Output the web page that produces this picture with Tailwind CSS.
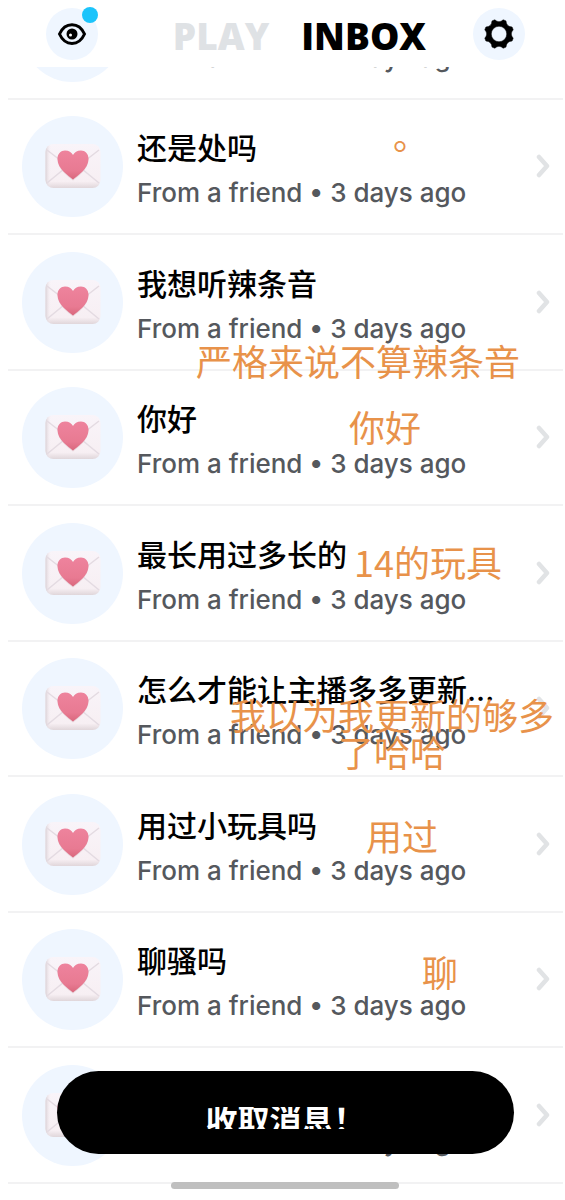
<!DOCTYPE html>
<html lang="zh-CN">
<head>
<meta charset="utf-8">
<meta name="viewport" content="width=device-width, initial-scale=1">
<title>INBOX</title>
<script src="https://cdn.jsdelivr.net/npm/@tailwindcss/browser@4"></script>
</head>
<body class="bg-white">
<svg class="absolute size-0" aria-hidden="true">
  <defs>
    <linearGradient id="paper" x1="0" y1="0" x2="0" y2="1"><stop offset="0" stop-color="#f9f4f9"/><stop offset="0.85" stop-color="#f7eff3"/><stop offset="1" stop-color="#e0d6da"/></linearGradient>
    <linearGradient id="heart" x1="0" y1="0" x2="0" y2="1"><stop offset="0" stop-color="#ee839d"/><stop offset="0.7" stop-color="#e87a92"/><stop offset="1" stop-color="#d9677c"/></linearGradient>
    <linearGradient id="edge" x1="0" y1="0" x2="1" y2="0"><stop offset="0" stop-color="#d9d0d5"/><stop offset="0.1" stop-color="#f7f0f5" stop-opacity="0"/></linearGradient>
  </defs>
  <symbol id="envelope" viewBox="0 0 56 46">
    <rect x="0.5" y="1" width="55" height="44" rx="8" fill="url(#paper)"/>
    <rect x="0.5" y="1" width="55" height="44" rx="8" fill="url(#edge)"/>
    <path d="M2 7 24 24q4 3 8 0L54 7M2 40l17-14M54 40 37 26" fill="none" stroke="#e4dbe2" stroke-width="1.5"/>
    <path d="M28 37.500C24 34 12.500 26.500 12.500 16.500 12.500 11 16 8 20 8c4 0 6.500 2 8 4.500C29.500 10 32 8 36 8c4 0 7.500 3 7.500 8.500C43.500 26.500 32 34 28 37.500Z" fill="#d9b9c4" opacity="0.5"/>
    <path d="M28 36.500C24 33 12.500 26 12.500 16 12.500 10.500 16 7.500 20 7.500c4 0 6.500 2 8 4.500C29.500 9.500 32 7.500 36 7.500c4 0 7.500 3 7.500 8.500C43.500 26 32 33 28 36.500Z" fill="url(#heart)"/>
  </symbol>
  <symbol id="chevron" viewBox="0 0 14 24">
    <path d="M3 3 11 12 3 21" fill="none" stroke="#e1e3e5" stroke-width="4.500" stroke-linecap="round" stroke-linejoin="round"/>
  </symbol>
</svg>

<div class="relative flex h-screen flex-col overflow-hidden font-['Inter','Noto_Sans_CJK_SC',sans-serif]">
  <header class="flex h-[67px] shrink-0 items-start justify-between pt-2 pr-10 pl-[46px]">
    <button type="button" aria-label="View" class="relative flex size-[52px] items-center justify-center rounded-full bg-[#eff6ff]">
      <svg class="h-6 w-[30px]" viewBox="0 0 30 24" aria-hidden="true">
        <path d="M2.500 12C8 -0.500 22 -0.500 27.500 12 22 24.500 8 24.500 2.500 12Z" fill="none" stroke="#000" stroke-width="3"/>
        <circle cx="15" cy="12" r="5.500"/><circle cx="13.500" cy="13" r="1.500" fill="#fff"/>
      </svg>
      <span class="absolute -top-px right-0 size-4 rounded-full bg-[#1cc4fb]"></span>
    </button>
    <nav class="flex gap-8 pt-[2px] pl-7 font-['Open_Sans',sans-serif] text-[37px] leading-[52px] font-extrabold">
      <a href="#play" class="text-[#dfe2e5]">PLAY</a>
      <a href="#inbox" class="text-black" aria-current="page">INBOX</a>
    </nav>
    <button type="button" aria-label="Settings" class="flex size-[52px] items-center justify-center rounded-full bg-[#eff6ff]">
      <svg class="size-[30px]" viewBox="0 0 30 30" aria-hidden="true">
        <path fill-rule="evenodd" stroke="#000" stroke-width="0.5" stroke-linejoin="round" d="M10.800 .8Q15 4.600 19.200 .8L22 1.900Q22.400 7.600 28.100 8L29.200 10.800Q25.400 15 29.200 19.200L28.100 22Q22.400 22.400 22 28.100L19.200 29.200Q15 25.400 10.800 29.200L8 28.100Q7.600 22.400 1.900 22L.8 19.200Q4.600 15 .8 10.800L1.900 8Q7.600 7.600 8 1.900ZM15 7.250a7.750 7.750 0 1 0 0 15.500 7.750 7.750 0 1 0 0-15.500Z"/>
      </svg>
    </button>
  </header>

  <main class="min-h-0 flex-1 overflow-hidden pr-[2px] pl-2">
    <ul id="list"></ul>
  </main>

  <button type="button" class="absolute right-[51px] bottom-[46px] left-[57px] flex h-[83px] items-center justify-center rounded-full bg-black pt-[11px] text-[32px] font-bold text-white">
    <span class="flex h-[22px] items-start overflow-hidden leading-[28px]">收取消息！</span>
  </button>
  <div class="absolute right-[166px] bottom-[11px] left-[171px] h-[7px] rounded-full bg-[#bfbfbf]"></div>
</div>

<script>
const rows = [
  { title: '你好' },
  { title: '还是处吗', note: '。', pos: 'left-[385px] top-[16px]' },
  { title: '我想听辣条音', note: '严格来说不算辣条音', pos: 'left-[188px] top-[107px]' },
  { title: '你好', note: '你好', pos: 'left-[341px] top-[37px]' },
  { title: '最长用过多长的', note: '14的玩具', pos: 'left-[346px] top-[37px]' },
  { title: '怎么才能让主播多多更新...', note: '我以为我更新的够多<br>了哈哈', pos: 'left-[222px] top-[54px]' },
  { title: '用过小玩具吗', note: '用过', pos: 'left-[358px] top-[40px]' },
  { title: '聊骚吗', note: '聊', pos: 'left-[414px] top-[40px]' },
  { title: '可以看看吗' },
  { title: '你好' },
];
document.getElementById('list').innerHTML = rows.map((r, i) => `
  <li class="relative flex items-end border-b-2 border-[#f2f2f3] ${i === 0 ? 'h-[33px]' : i % 2 ? 'h-[135px]' : 'h-[136px]'}">
    <a href="#message-${i}" class="flex h-[134px] w-full shrink-0 items-center gap-[14px] pr-[13px] pl-[14px]">
      <span class="flex size-[101px] shrink-0 items-center justify-center rounded-full bg-[#eff6ff]">
        <svg class="h-[46px] w-14" aria-hidden="true"><use href="#envelope"/></svg>
      </span>
      <span class="flex min-w-0 flex-1 flex-col pt-[6px] whitespace-nowrap">
        <span class="text-[30px] leading-[48px] font-medium text-black">${r.title}</span>
        <span class="text-[26px] leading-[42px] font-medium text-[#55585d]">From a friend • 3 days ago</span>
      </span>
      <svg class="h-6 w-[14px] shrink-0" aria-hidden="true"><use href="#chevron"/></svg>
    </a>
    ${r.note ? `<p class="absolute z-10 ${r.pos} text-center font-['Noto_Sans_CJK_SC',sans-serif] text-[36px] leading-[37px] whitespace-nowrap text-[#e8924a]">${r.note}</p>` : ''}
  </li>`).join('');
</script>
</body>
</html>
